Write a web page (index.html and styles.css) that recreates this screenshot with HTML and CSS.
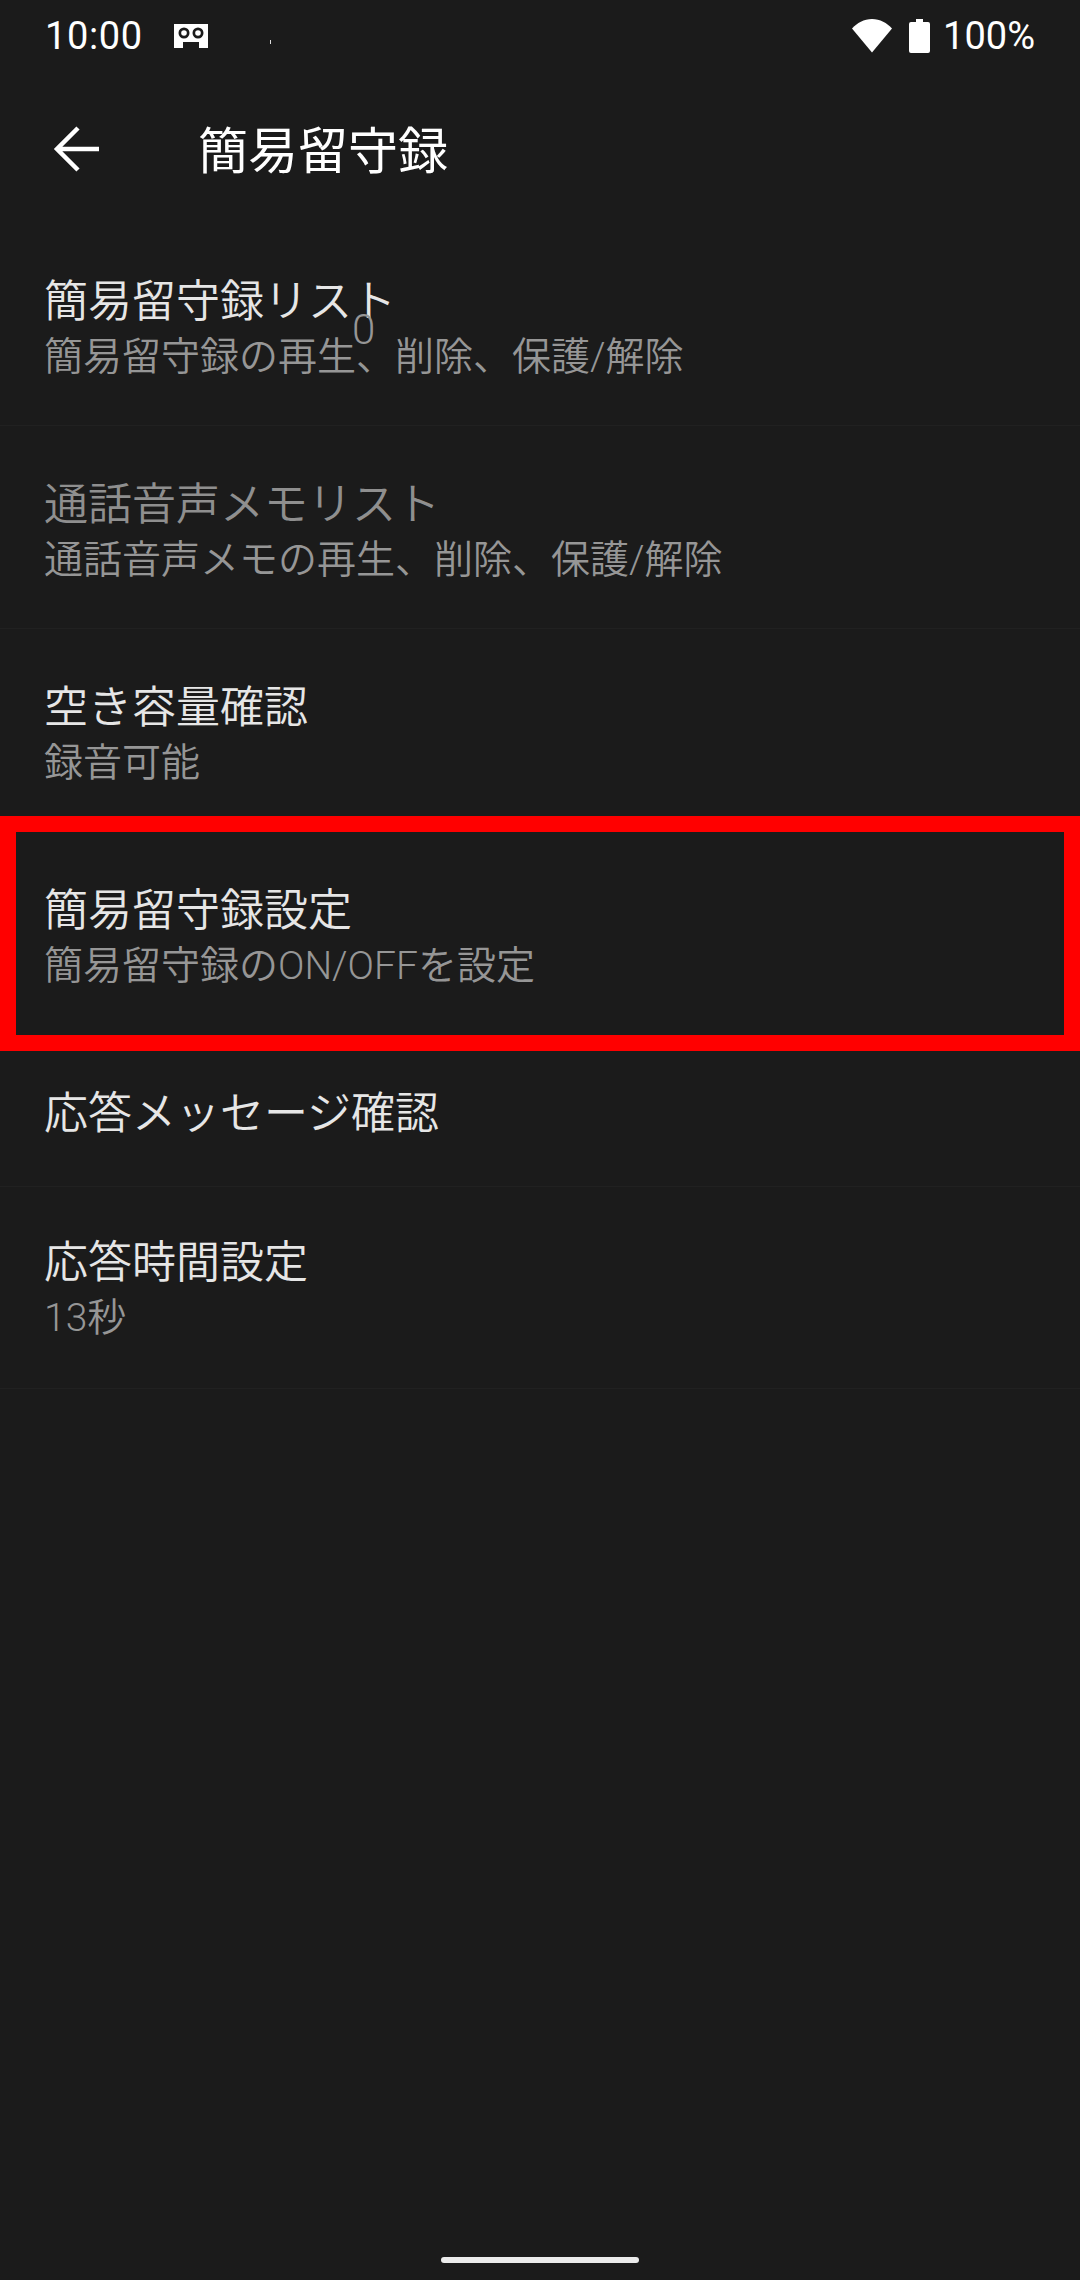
FILE: index.html
```html
<!DOCTYPE html>
<html lang="ja">
<head>
    <meta charset="UTF-8">
    <meta name="viewport" content="width=device-width, initial-scale=1.0">
    <title>簡易留守録</title>
    <link rel="stylesheet" href="styles.css">
</head>
<body>
    <div class="status-bar">
        <span class="clock">10:00</span>
        <svg class="voicemail-icon" width="36" height="26" viewBox="0 0 36 26">
            <path fill-rule="evenodd" fill="#fff" d="M1 1h34v24h-9v-6H10v6H1z M11 4.500a5.500 5.500 0 1 0 0 11a5.500 5.500 0 1 0 0-11z M25 4.500a5.500 5.500 0 1 0 0 11a5.500 5.500 0 1 0 0-11z"/>
            <circle cx="11" cy="10" r="2.800" fill="#fff"/>
            <circle cx="25" cy="10" r="2.800" fill="#fff"/>
        </svg>
        <span class="speck"></span>
        <span class="spacer"></span>
        <svg class="wifi-icon" width="40" height="34" viewBox="0 0 40 34">
            <path fill="#fff" d="M0 9.500C5 4 12 0 20 0s15 4 20 9.500L20 33.500z"/>
        </svg>
        <svg class="battery-icon" width="21" height="34" viewBox="0 0 21 34">
            <path fill="#fff" d="M7 0h7v3h5a2 2 0 0 1 2 2v27a2 2 0 0 1-2 2H2a2 2 0 0 1-2-2V5a2 2 0 0 1 2-2h5z"/>
        </svg>
        <span class="battery-text">100%</span>
    </div>

    <header class="app-bar">
        <svg class="back-icon" width="48" height="48" viewBox="0 0 48 48">
            <path fill="none" stroke="#fff" stroke-width="4.500" d="M46 24H5M25 3L4 24l21 21"/>
        </svg>
        <h1>簡易留守録</h1>
    </header>

    <div class="list">
        <div class="row">
            <div class="row-title">簡易留守録リスト</div>
            <div class="row-sub">簡易留守録の再生、削除、保護/解除</div>
            <span class="count">0</span>
        </div>
        <div class="row">
            <div class="row-title disabled">通話音声メモリスト</div>
            <div class="row-sub">通話音声メモの再生、削除、保護/解除</div>
        </div>
        <div class="row">
            <div class="row-title">空き容量確認</div>
            <div class="row-sub">録音可能</div>
        </div>
        <div class="row row-marked">
            <div class="row-title">簡易留守録設定</div>
            <div class="row-sub">簡易留守録のON/OFFを設定</div>
        </div>
        <div class="row row-single">
            <div class="row-title">応答メッセージ確認</div>
        </div>
        <div class="row row-last">
            <div class="row-title">応答時間設定</div>
            <div class="row-sub">13秒</div>
        </div>
    </div>

    <div class="home-bar"></div>
</body>
</html>
```

FILE: styles.css
```css
body {
    margin: 0;
    width: 1080px;
    height: 2280px;
    background-color: #1b1b1b;
    font-family: Roboto, "Noto Sans CJK JP", sans-serif;
    font-weight: 350;
    color: #fff;
    position: relative;
    overflow: hidden;
}

.status-bar {
    height: 72px;
    display: flex;
    align-items: center;
    padding: 0 45px;
    font-size: 38px;
    font-weight: 400;
    box-sizing: border-box;
}

.clock {
    letter-spacing: 0.6px;
}

.voicemail-icon {
    margin-left: 30px;
}

.speck {
    width: 1px;
    height: 4px;
    background: #ddd;
    margin-left: 61px;
    margin-top: 11px;
}

.spacer {
    flex: 1;
}

.wifi-icon {
    margin-right: 17px;
}

.battery-icon {
    margin-right: 13px;
}

.app-bar {
    height: 151px;
    display: flex;
    align-items: center;
    padding-left: 53px;
    box-sizing: border-box;
}

.back-icon {
    width: 48px;
    height: 48px;
    margin-top: 2px;
}

h1 {
    margin: 0 0 2px 97px;
    font-size: 50px;
    font-weight: 400;
}

.list {
    display: flex;
    flex-direction: column;
}

.row {
    height: 203px;
    box-sizing: border-box;
    padding: 50px 44px 0;
    border-bottom: 1px solid #212121;
    position: relative;
}

.row-title {
    font-size: 44px;
    line-height: 58px;
    color: #e6e6e6;
}

.row-title.disabled {
    color: #8f8f8f;
}

.row-sub {
    font-size: 39px;
    line-height: 52px;
    color: #969696;
}

.count {
    position: absolute;
    left: 352px;
    top: 82px;
    font-size: 42px;
    color: #969696;
}

.row-marked {
    margin: 0 16px;
    padding-left: 28px;
    border-bottom: none;
    outline: 16px solid #f00;
}

.row-single {
    height: 152px;
}

.row-last {
    height: 202px;
    padding-top: 47px;
}

.home-bar {
    position: absolute;
    left: 441px;
    top: 2257px;
    width: 198px;
    height: 6px;
    border-radius: 3px;
    background: #ececec;
}
```
